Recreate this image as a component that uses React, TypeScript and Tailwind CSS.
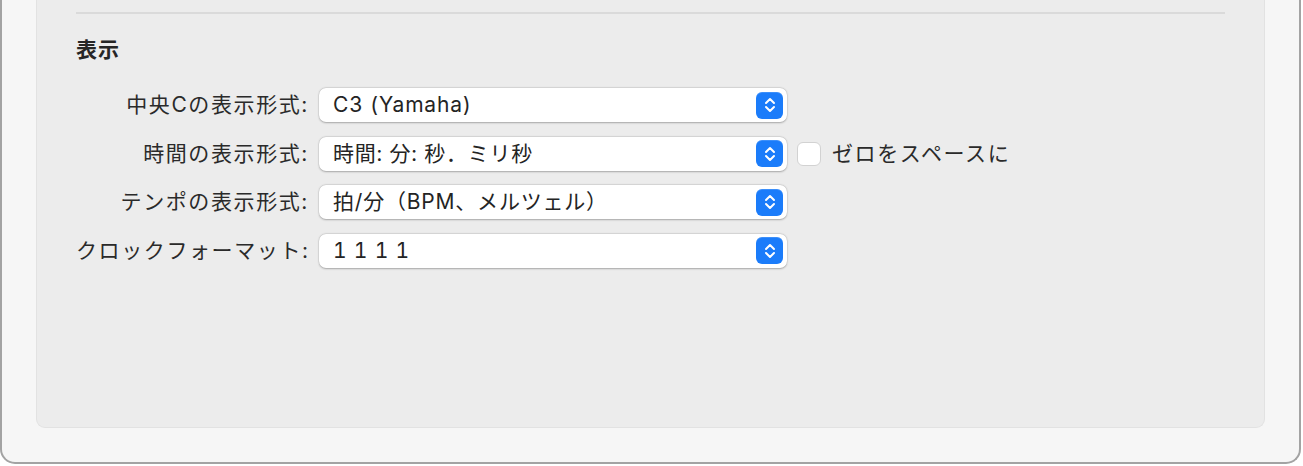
import React from 'react';

const rows = [
  { label: '中央Cの表示形式:', value: 'C3 (Yamaha)' },
  { label: '時間の表示形式:', value: '時間: 分: 秒．ミリ秒', checkbox: 'ゼロをスペースに' },
  { label: 'テンポの表示形式:', value: '拍/分（BPM、メルツェル）' },
  { label: 'クロックフォーマット:', value: '1 1 1 1' },
];

function Stepper() {
  return (
    <div className="w-[27px] h-[27px] rounded-[6px] bg-[#1b7cfa] flex items-center justify-center shadow-[inset_0_1px_0_rgba(255,255,255,0.15)]">
      <svg width="14" height="18" viewBox="0 0 14 18" fill="none">
        <path d="M3 7 L7 3 L11 7" stroke="white" strokeWidth="2" strokeLinecap="round" strokeLinejoin="round" />
        <path d="M3 11 L7 15 L11 11" stroke="white" strokeWidth="2" strokeLinecap="round" strokeLinejoin="round" />
      </svg>
    </div>
  );
}

function Popup({ value }: { value: string }) {
  return (
    <div className="w-[468px] h-[34px] rounded-[7px] bg-white flex items-center justify-between pl-[14px] pr-[4px] shadow-[0_0.5px_2px_rgba(0,0,0,0.28),0_0_0_0.5px_rgba(0,0,0,0.06)]">
      <span className="text-[21px] text-[#242424] tracking-[0.8px] whitespace-pre tabular-nums">{value}</span>
      <Stepper />
    </div>
  );
}

export default function App() {
  return (
    <div
      className="w-[1303px] h-[466px] bg-white"
      style={{ fontFamily: 'Inter, "Noto Sans CJK JP", sans-serif' }}
    >
      <div className="w-[1301px] h-[464px] bg-[#f6f6f6] border-x-2 border-b-2 border-[#a3a3a3] rounded-b-[15px] px-[34px] pb-[34px] flex">
        <div className="flex-1 bg-[#ececec] border-x border-b border-[#e2e2e2] rounded-b-[9px] px-[39px] pt-[12px]">
          <div className="h-[2px] bg-[#dadada]" />
          <h2 className="mt-[22px] text-[21px] font-bold text-[#262626] leading-[28px] tracking-[1px]">表示</h2>
          <div className="mt-[24px] flex flex-col gap-[14.6px]">
            {rows.map((r) => (
              <div key={r.label} className="flex items-center">
                <div className="w-[243px] pr-[10px] text-right text-[21px] text-[#2a2a2a] tracking-[1.6px] whitespace-nowrap">
                  {r.label}
                </div>
                <Popup value={r.value} />
                {r.checkbox && (
                  <div className="flex items-center ml-[10px]">
                    <div className="w-[24px] h-[24px] rounded-[6px] bg-white border border-[#d2d2d2]" />
                    <span className="ml-[11px] text-[21px] text-[#2a2a2a] tracking-[1.6px]">{r.checkbox}</span>
                  </div>
                )}
              </div>
            ))}
          </div>
        </div>
      </div>
    </div>
  );
}
